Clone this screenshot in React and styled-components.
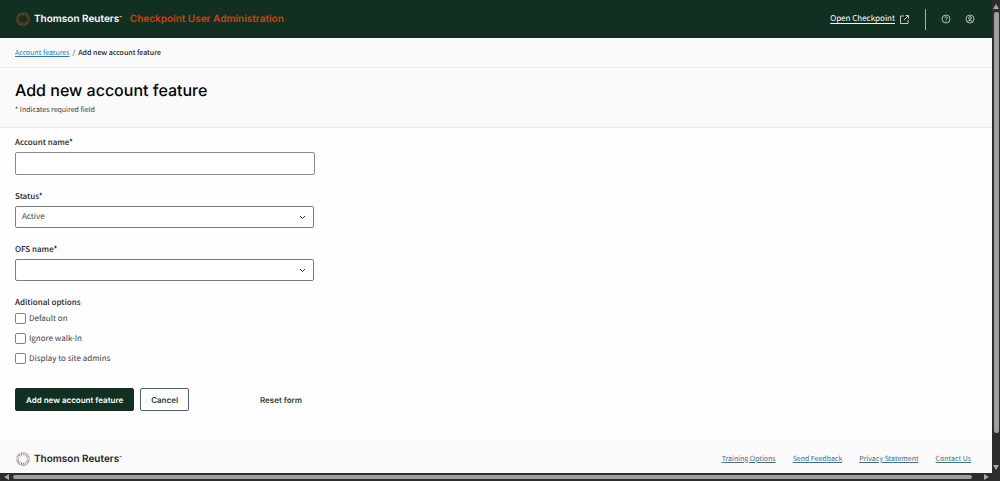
import React from "react";
import styled, { createGlobalStyle } from "styled-components";

const body = `"Noto Sans CJK SC", "Noto Sans", sans-serif`;
const display = `Inter, "Liberation Sans", sans-serif`;

const GlobalStyle = createGlobalStyle`
  *, *::before, *::after { box-sizing: border-box; }
  body {
    margin: 0;
    background: #fff;
    color: #212223;
    font: 7px/12px ${body};
    text-rendering: geometricPrecision;
  }
  button, input, select { font: inherit; color: inherit; margin: 0; text-rendering: inherit; }
`;

const Window = styled.div`
  display: grid;
  grid-template-columns: minmax(0, 1fr) 8px;
  grid-template-rows: 1fr 8px;
  min-height: 100vh;
  background: #2b2c2b;
`;

const Page = styled.div`
  display: flex;
  flex-direction: column;
  background: #fefefe;
`;

const Header = styled.header`
  display: flex;
  align-items: center;
  height: 38px;
  padding: 0 17px 0 16px;
  background: #123021;
  color: #fff;
`;

const Brand = styled.span`
  display: flex;
  align-items: center;
  gap: 4px;
  font: 600 10px/14px ${display};
  color: ${(p) => (p.$light ? "#fff" : "#212223")};
  sup { font-size: 4px; line-height: 1; vertical-align: 3px; }
`;

const Product = styled.span`
  margin-left: 8px;
  font: 600 10px/14px ${display};
  color: #d64000;
`;

const HeaderTools = styled.div`
  display: flex;
  align-items: center;
  margin-left: auto;
`;

const OpenLink = styled.a`
  display: flex;
  align-items: center;
  gap: 5px;
  font-size: 8px;
  color: #fff;
  text-underline-offset: 2px;
`;

const Divider = styled.span`
  width: 1px;
  height: 21px;
  margin: 0 15px 0 16px;
  background: #a3b0a8;
`;

const IconButton = styled.button`
  display: flex;
  padding: 0;
  border: 0;
  background: none;
  color: #d5dcd8;
  & + & { margin-left: 14px; }
`;

const Breadcrumbs = styled.nav`
  display: flex;
  align-items: center;
  gap: 3px;
  height: 30px;
  padding: 0 15px;
  border-bottom: 1px solid #eeeeee;
  background: #fafafa;
  b { font-weight: 500; }
`;

const TextLink = styled.a`
  color: ${(p) => (p.$muted ? "#45708a" : "#2a7ab0")};
  text-underline-offset: 1px;
`;

const TitleBar = styled.div`
  height: 60px;
  padding: 11px 15px 0;
  border-bottom: 1px solid #ececec;
  background: #fafafa;
  color: #404040;
`;

const Title = styled.h1`
  margin: 0 0 2px;
  font: 500 16px/23px ${display};
  color: #000;
`;

const Form = styled.form`
  display: flex;
  flex-direction: column;
  gap: 15px;
  width: 330px;
  max-width: 100%;
  padding: 8px 15px 30px;
`;

const Field = styled.div`
  display: flex;
  flex-direction: column;
  gap: 2px;
`;

const Label = styled.label`
  font-size: 8px;
  line-height: 14px;
  font-weight: 500;
`;

const TextInput = styled.input`
  height: 23px;
  padding: 0 6px;
  border: 1px solid #8a8a8a;
  border-radius: 2px;
  background: #fff;
  font-size: 8px;
`;

const SelectBox = styled.div`
  display: grid;
  align-items: center;
  margin-right: 1px;
  > * { grid-area: 1 / 1; }
  > svg { justify-self: end; margin-right: 8px; pointer-events: none; }
`;

const Select = styled.select`
  appearance: none;
  width: 100%;
  height: 22px;
  padding: 0 6px;
  border: 1px solid #7c7c7c;
  border-radius: 2px;
  background: #fff;
  color: #404040;
  font-size: 8px;
`;

const Options = styled.fieldset`
  margin: 0;
  padding: 0;
  border: 0;
  font-size: 8px;
  legend { padding: 0; margin-bottom: 3px; line-height: 14px; font-weight: 500; }
`;

const OptionList = styled.div`
  display: flex;
  flex-direction: column;
  gap: 9px;
`;

const Option = styled.label`
  display: flex;
  align-items: center;
  gap: 3px;
  height: 11px;
  color: #404040;
`;

const Checkbox = styled.input`
  appearance: none;
  width: 11px;
  height: 11px;
  border: 1px solid #808080;
  border-radius: 2px;
  background: #fff;
  &:checked { background: #123021; }
`;

const Actions = styled.div`
  display: flex;
  gap: 6px;
  padding-top: 9px;
`;

const Button = styled.button`
  height: 23px;
  padding: 0 ${(p) => (p.$kind === "text" ? 12 : 10)}px;
  border: 1px solid ${(p) => (p.$kind === "text" ? "transparent" : p.$kind === "outline" ? "#4d6558" : "#123021")};
  border-radius: 2px;
  background: ${(p) => (p.$kind === "primary" ? "#123021" : "transparent")};
  color: ${(p) => (p.$kind === "primary" ? "#fff" : "#1d4532")};
  font: 600 8px/12px ${display};
  white-space: nowrap;
  &[type="reset"] { margin-left: auto; }
`;

const Footer = styled.footer`
  display: flex;
  align-items: center;
  justify-content: space-between;
  height: 32px;
  margin-top: auto;
  padding: 3px 21px 0 16px;
  background: #fafafa;
`;

const FooterLinks = styled.nav`
  display: flex;
  gap: 17px;
`;

const VerticalBar = styled.div`
  display: flex;
  flex-direction: column;
  align-items: center;
  gap: 3px;
  padding: 4px 0 3px;
`;

const HorizontalBar = styled.div`
  grid-column: 1 / -1;
  display: flex;
  align-items: center;
  gap: 4px;
  padding: 0 11px 0 4px;
`;

const Thumb = styled.span`
  flex: 1;
  min-width: 5px;
  min-height: 4px;
  border-radius: 2px;
  background: #9f9f9f;
`;

const Spacer = styled.span`
  flex: 0 0 ${(p) => p.$size}px;
`;

const rings = [
  { r: 6.3, n: 18, s: 0.6 },
  { r: 4.9, n: 15, s: 0.55 },
  { r: 3.6, n: 10, s: 0.35 },
];

function Emblem({ light }) {
  return (
    <svg width="14" height="14" viewBox="-7 -7 14 14" aria-hidden="true">
      {rings.map(({ r, n, s }, ring) =>
        Array.from({ length: n }, (_, i) => {
          const a = ((i + ring * 0.5) / n) * Math.PI * 2;
          const accent = (i + ring) % 3 === 0;
          const fill = light ? (accent ? "#a8664a" : "#e24a08") : accent ? "#d65a28" : "#404040";
          return (
            <circle
              key={`${ring}-${i}`}
              cx={(Math.cos(a) * r).toFixed(2)}
              cy={(Math.sin(a) * r).toFixed(2)}
              r={s}
              fill={fill}
            />
          );
        })
      )}
    </svg>
  );
}

function Logo({ light }) {
  return (
    <Brand $light={light}>
      <Emblem light={light} />
      <span>Thomson Reuters<sup>™</sup></span>
    </Brand>
  );
}

function ExternalIcon() {
  return (
    <svg width="9" height="9" viewBox="0 0 9 9" fill="none" stroke="#d5dcd8" strokeWidth="0.9" aria-hidden="true">
      <path d="M4 1H.5v7.5H8V5M5.5.5h3v3M8.5.5 4 5" />
    </svg>
  );
}

function HelpIcon() {
  return (
    <svg width="10" height="10" viewBox="0 0 10 10" fill="none" stroke="currentColor" strokeWidth="0.8" aria-hidden="true">
      <circle cx="5" cy="5" r="4" />
      <path d="M3.7 4.1C3.7 2.3 6.4 2.4 6.3 4 6.2 4.8 5 4.9 5 5.9M5 6.6v.8" />
    </svg>
  );
}

function UserIcon() {
  return (
    <svg width="10" height="10" viewBox="0 0 10 10" fill="none" stroke="currentColor" strokeWidth="0.8" aria-hidden="true">
      <circle cx="5" cy="5" r="4" />
      <circle cx="5" cy="4" r="1.4" />
      <path d="M2.5 7.7C3 6 7 6 7.5 7.7" />
    </svg>
  );
}

function Chevron() {
  return (
    <svg width="7" height="5" viewBox="0 0 7 5" fill="none" stroke="#303030" strokeWidth="1" aria-hidden="true">
      <path d="M1 1l2.5 2.5L6 1" />
    </svg>
  );
}

const arrows = {
  up: "M0 5 3 0 6 5z",
  down: "M0 0h6L3 5z",
  left: "M5 0v6L0 3z",
  right: "M0 0v6l5-3z",
};

function Arrow({ dir }) {
  const upright = dir === "up" || dir === "down";
  return (
    <svg width={upright ? 6 : 5} height={upright ? 5 : 6} viewBox={upright ? "0 0 6 5" : "0 0 5 6"} aria-hidden="true">
      <path d={arrows[dir]} fill="#a8a8a8" />
    </svg>
  );
}

export default function App() {
  return (
    <>
      <GlobalStyle />
      <Window>
        <Page>
          <Header>
            <Logo light />
            <Product>Checkpoint User Administration</Product>
            <HeaderTools>
              <OpenLink href="#open">
                Open Checkpoint
                <ExternalIcon />
              </OpenLink>
              <Divider />
              <IconButton type="button" aria-label="Help"><HelpIcon /></IconButton>
              <IconButton type="button" aria-label="Account"><UserIcon /></IconButton>
            </HeaderTools>
          </Header>
          <Breadcrumbs aria-label="Breadcrumb">
            <TextLink href="#features">Account features</TextLink>
            <span>/</span>
            <b>Add new account feature</b>
          </Breadcrumbs>
          <TitleBar>
            <Title>Add new account feature</Title>
            * Indicates required field
          </TitleBar>
          <Form>
            <Field>
              <Label htmlFor="account">Account name*</Label>
              <TextInput id="account" type="text" />
            </Field>
            <Field>
              <Label htmlFor="status">Status*</Label>
              <SelectBox>
                <Select id="status" defaultValue="Active">
                  <option>Active</option>
                </Select>
                <Chevron />
              </SelectBox>
            </Field>
            <Field>
              <Label htmlFor="ofs">OFS name*</Label>
              <SelectBox>
                <Select id="ofs" defaultValue="">
                  <option value="" />
                </Select>
                <Chevron />
              </SelectBox>
            </Field>
            <Options>
              <legend>Aditional options</legend>
              <OptionList>
                {["Default on", "Ignore walk-In", "Display to site admins"].map((name) => (
                  <Option key={name}>
                    <Checkbox type="checkbox" />
                    {name}
                  </Option>
                ))}
              </OptionList>
            </Options>
            <Actions>
              <Button type="submit" $kind="primary">Add new account feature</Button>
              <Button type="button" $kind="outline">Cancel</Button>
              <Button type="reset" $kind="text">Reset form</Button>
            </Actions>
          </Form>
          <Footer>
            <Logo />
            <FooterLinks aria-label="Footer">
              {["Training Options", "Send Feedback", "Privacy Statement", "Contact Us"].map((name) => (
                <TextLink key={name} href="#footer" $muted>{name}</TextLink>
              ))}
            </FooterLinks>
          </Footer>
        </Page>
        <VerticalBar aria-hidden="true">
          <Arrow dir="up" />
          <Thumb />
          <Spacer $size={26} />
          <Arrow dir="down" />
        </VerticalBar>
        <HorizontalBar aria-hidden="true">
          <Arrow dir="left" />
          <Thumb />
          <Spacer $size={4} />
          <Arrow dir="right" />
        </HorizontalBar>
      </Window>
    </>
  );
}
